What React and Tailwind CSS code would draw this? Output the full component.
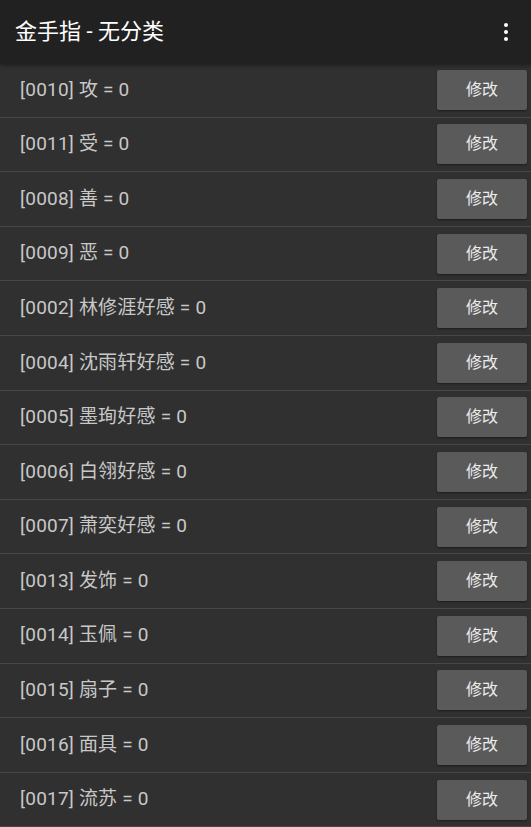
import React from 'react';

const items = [
  ['0010', '攻'],
  ['0011', '受'],
  ['0008', '善'],
  ['0009', '恶'],
  ['0002', '林修涯好感'],
  ['0004', '沈雨轩好感'],
  ['0005', '墨珣好感'],
  ['0006', '白翎好感'],
  ['0007', '萧奕好感'],
  ['0013', '发饰'],
  ['0014', '玉佩'],
  ['0015', '扇子'],
  ['0016', '面具'],
  ['0017', '流苏'],
];

const font = { fontFamily: 'Roboto, "Noto Sans CJK SC", sans-serif' };

export default function App() {
  return (
    <div className="w-[531px] h-[827px] overflow-hidden bg-[#303030]" style={font}>
      {/* Toolbar */}
      <div className="relative z-10 h-[63px] bg-[#212121] flex items-center justify-between pl-[15px] pr-[23px] shadow-[0_2px_4px_rgba(0,0,0,0.45)]">
        <span className="text-[22px] text-white">金手指 - 无分类</span>
        <div className="flex flex-col gap-[3px] items-center">
          <span className="w-[4px] h-[4px] rounded-full bg-white" />
          <span className="w-[4px] h-[4px] rounded-full bg-white" />
          <span className="w-[4px] h-[4px] rounded-full bg-white" />
        </div>
      </div>

      {/* List */}
      <div className="flex flex-col">
        {items.map(([id, name]) => (
          <div
            key={id}
            className="h-[54.6px] shrink-0 flex items-center justify-between pl-[20px] pr-[4px] border-b border-[#474747]"
          >
            <span className="text-[19px] text-[#c8c8c8] tracking-[0.2px]">
              [{id}]&nbsp;{name}&nbsp;=&nbsp;0
            </span>
            <button className="w-[90px] h-[40px] rounded-[2px] bg-[#5a5a5a] text-[16px] text-[#ececec] shadow-[0_1px_2px_rgba(0,0,0,0.4)]">
              修改
            </button>
          </div>
        ))}
      </div>
    </div>
  );
}
